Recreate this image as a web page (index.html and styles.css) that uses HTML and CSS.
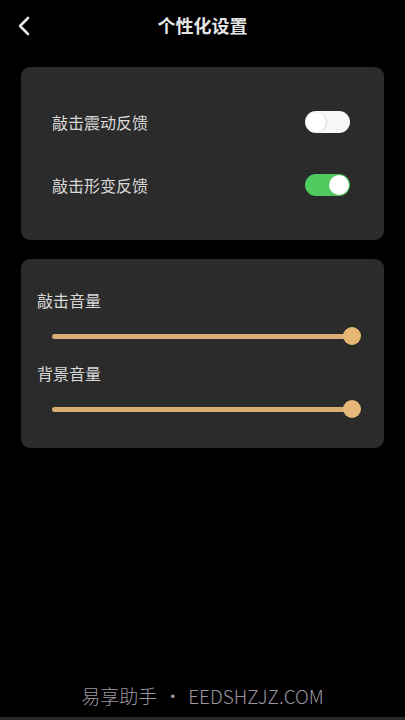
FILE: index.html
```html
<!DOCTYPE html>
<html lang="zh">
<head>
<meta charset="utf-8">
<title>个性化设置</title>
<link rel="stylesheet" href="styles.css">
</head>
<body>
<div class="screen">
  <header class="topbar">
    <div class="back">
      <svg width="14" height="20" viewBox="0 0 14 20"><path d="M11 2 L3 10 L11 18" fill="none" stroke="#e6e6e6" stroke-width="2.6" stroke-linecap="round" stroke-linejoin="round"/></svg>
    </div>
    <h1 class="title">个性化设置</h1>
    <div></div>
  </header>
  <main class="content">
    <section class="card toggles">
      <div class="row">
        <span class="label">敲击震动反馈</span>
        <span class="switch off"><span class="knob"></span></span>
      </div>
      <div class="row">
        <span class="label">敲击形变反馈</span>
        <span class="switch on"><span class="knob"></span></span>
      </div>
    </section>
    <section class="card sliders">
      <div class="label">敲击音量</div>
      <div class="slider"><span class="track"></span><span class="thumb"></span></div>
      <div class="label second">背景音量</div>
      <div class="slider"><span class="track"></span><span class="thumb"></span></div>
    </section>
  </main>
  <div class="watermark">易享助手<span class="dot">•</span>EEDSHZJZ.COM</div>
  <div class="bottomline"></div>
</div>
</body>
</html>
```
FILE: styles.css
```css
html, body {
  margin: 0;
  padding: 0;
  background: #000;
}
body {
  font-family: "Noto Sans CJK SC", "Noto Sans", sans-serif;
  color: #dcdcdc;
}
.screen {
  position: relative;
  width: 405px;
  height: 720px;
  overflow: hidden;
  background: #000;
}
.topbar {
  display: grid;
  grid-template-columns: 60px 1fr 60px;
  align-items: center;
  height: 50px;
}
.back {
  padding-left: 17px;
  display: flex;
  align-items: center;
  padding-top: 1px;
}
.title {
  margin: 0;
  text-align: center;
  font-size: 18px;
  font-weight: 700;
  color: #e4e4e4;
  line-height: 22px;
}
.content {
  padding: 17px 21px 0;
  display: flex;
  flex-direction: column;
  gap: 19px;
}
.card {
  background: #2b2b2b;
  border-radius: 9px;
}
.toggles {
  padding: 44px 34px 44px 31px;
  display: flex;
  flex-direction: column;
  gap: 41px;
}
.row {
  display: flex;
  align-items: center;
  justify-content: space-between;
  height: 22px;
}
.label {
  font-size: 16px;
  line-height: 22px;
  color: #d9d9d9;
}
.switch {
  position: relative;
  width: 45px;
  height: 22px;
  border-radius: 11px;
  box-sizing: border-box;
}
.switch.off {
  background: #f7f7f7;
}
.switch.on {
  background: #4fcb60;
}
.knob {
  position: absolute;
  top: 1px;
  width: 20px;
  height: 20px;
  border-radius: 50%;
  background: #fff;
}
.switch.off .knob {
  left: 1px;
  box-shadow: 1px 0 1px rgba(0,0,0,0.12);
}
.switch.on .knob {
  right: 1px;
  box-shadow: 0 0 2px rgba(0,0,0,0.2);
}
.sliders {
  padding: 30px 23px 29px 16px;
  display: flex;
  flex-direction: column;
}
.slider {
  display: flex;
  align-items: center;
  height: 20px;
  margin: 15px 0 0 15px;
}
.label.second {
  margin-top: 16px;
}
.track {
  flex: 1;
  height: 5px;
  border-radius: 3px;
  background: #d9ae74;
}
.thumb {
  width: 18px;
  height: 18px;
  border-radius: 50%;
  background: #e6b877;
  margin-left: -9px;
}
.watermark {
  position: absolute;
  left: 0;
  right: 0;
  top: 683px;
  text-align: center;
  font-size: 19px;
  line-height: 26px;
  font-weight: 300;
  color: #9d95a2;
}
.dot {
  margin: 0 6px;
}
.bottomline {
  position: absolute;
  left: 0;
  right: 0;
  bottom: 0;
  height: 3px;
  background: #2a2a2a;
}
```
